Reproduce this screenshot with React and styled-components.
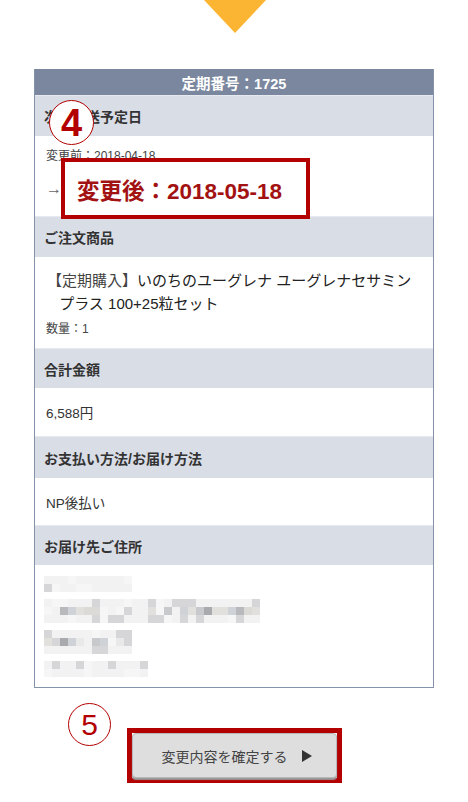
import React from 'react'
import styled, {createGlobalStyle} from 'styled-components'

const GlobalStyle = createGlobalStyle`
  html, body {
    margin: 0;
    padding: 0;
    background: #fff;
  }
  body {
    font-family: "Liberation Sans", "Noto Sans CJK JP", sans-serif;
    color: #333;
  }
`

const annotationRed = '#b30000'

const Page = styled.div`
  width: 468px;
  height: 802px;
  display: flex;
  flex-direction: column;
  align-items: center;
  overflow: hidden;
`

const ArrowDown = styled.div`
  width: 0;
  height: 0;
  border-left: 31px solid transparent;
  border-right: 31px solid transparent;
  border-top: 33px solid #fbb532;
  margin-left: 2px;
`

const Panel = styled.section`
  position: relative;
  box-sizing: border-box;
  width: 400px;
  margin-top: 36px;
  border: 1px solid #8593aa;
  border-top: none;
`

const PanelTitle = styled.div`
  height: 26px;
  background: #7a879e;
  color: #fff;
  font-weight: bold;
  font-size: 14.5px;
  display: flex;
  align-items: center;
  justify-content: center;
`

const SectionHead = styled.div`
  box-sizing: border-box;
  height: ${props => props.h || 41}px;
  background: #d9dde6;
  border-top: 1px solid #e6e9ef;
  padding-left: 9px;
  display: flex;
  align-items: center;
  font-size: 14px;
  font-weight: bold;
  color: #333;
`

const SectionBody = styled.div`
  box-sizing: border-box;
  height: ${props => props.h}px;
  padding: ${props => props.pad || '0 11px'};
  display: flex;
  flex-direction: column;
  justify-content: ${props => props.justify || 'center'};
  font-size: 13.5px;
  color: #333;
`

const BeforeLine = styled.div`
  font-size: 12px;
  color: #444;
  margin-top: 12px;
  line-height: 16px;
`

const AfterRow = styled.div`
  display: flex;
  align-items: center;
  margin-top: -6px;
`

const ArrowText = styled.span`
  font-size: 16px;
  color: #666;
  width: 14px;
  overflow: visible;
  white-space: nowrap;
`

const AfterBox = styled.div`
  position: relative;
  z-index: 1;
  box-sizing: border-box;
  width: 249px;
  height: 61px;
  margin-left: 1px;
  border: 4px solid ${annotationRed};
  background: #fff;
  display: flex;
  align-items: center;
  padding-left: 12px;
  color: #a31212;
  font-size: 22.5px;
  font-weight: bold;
`

const ProductName = styled.div`
  font-size: 15px;
  line-height: 23px;
  color: #222;
  padding-left: 2px;
  text-indent: -8px;
  margin-left: 7px;
`

const Bracket = styled.span`
  color: #444;
`

const Quantity = styled.div`
  font-size: 12px;
  color: #444;
  margin-top: 4px;
`

const AddressLines = styled.div`
  display: flex;
  flex-direction: column;
  gap: 7px;
  padding-top: 11px;
`

const Blur = styled.div`
  display: grid;
  grid-template-columns: repeat(${props => props.cols}, 8px);
  grid-auto-rows: ${props => props.rowH || 8}px;
  margin-left: -2px;
`

const Cell = styled.div`
  background: ${props => props.c};
`

const CircleMark = styled.div`
  position: absolute;
  box-sizing: border-box;
  width: ${props => props.size}px;
  height: ${props => props.size}px;
  border-radius: 50%;
  border: 1.5px solid ${annotationRed};
  background: ${props => (props.filled ? '#fff' : 'transparent')};
  color: ${annotationRed};
  display: flex;
  align-items: center;
  justify-content: center;
  line-height: 1;
  font-family: "Liberation Sans Narrow", "Liberation Sans", sans-serif;
  font-weight: ${props => (props.bold ? 'bold' : 'normal')};
  font-size: ${props => props.fs}px;
  left: ${props => props.x}px;
  top: ${props => props.y}px;
`

const Footer = styled.div`
  position: relative;
  width: 468px;
  margin-top: 40px;
  display: flex;
  justify-content: center;
`

const ButtonFrame = styled.div`
  border: 5px solid ${annotationRed};
  margin-left: 1px;
`

const ConfirmButton = styled.button`
  box-sizing: border-box;
  width: 205px;
  height: 45px;
  border: 1px solid #b8b8b8;
  border-radius: 4px;
  background: #dedede;
  box-shadow: 0 2px 1px #9a9a9a;
  font-family: "Liberation Sans", "Noto Sans CJK JP", sans-serif;
  font-size: 14px;
  color: #444;
  display: flex;
  align-items: center;
  justify-content: center;
  gap: 14px;
  padding: 0 0 0 4px;
  cursor: pointer;
`

const PlayIcon = styled.span`
  width: 0;
  height: 0;
  border-top: 6px solid transparent;
  border-bottom: 6px solid transparent;
  border-left: 10px solid #333;
`

// deterministic "pixelated" placeholder for the blurred address
const greys = ['#e9e9ea', '#d6d6d8', '#c8c9cc', '#f2f2f3', '#b8b9bc', '#dcdad6', '#cfd2d6', '#a9aaad', '#e2e0dc', '#f6f6f7']

function BlurBlock({cols, rows, seed}) {
  const cells = []
  let s = seed
  for (let i = 0; i < cols * rows; i++) {
    s = (s * 9301 + 49297) % 233280
    const row = Math.floor(i / cols)
    let idx = Math.floor((s / 233280) * greys.length)
    if (row === 0 || row === rows - 1) idx = (idx % 4 === 0) ? 3 : [0, 3, 9, 1][idx % 4]
    cells.push(<Cell key={i} c={greys[idx]} />)
  }
  return <Blur cols={cols}>{cells}</Blur>
}

export default function App() {
  return (
    <Page>
      <GlobalStyle />
      <ArrowDown />
      <Panel>
        <PanelTitle>定期番号：1725</PanelTitle>

        <SectionHead>次回発送予定日</SectionHead>
        <SectionBody h={80} justify="flex-start">
          <BeforeLine>変更前：2018-04-18</BeforeLine>
          <AfterRow>
            <ArrowText>→</ArrowText>
            <AfterBox>変更後：2018-05-18</AfterBox>
          </AfterRow>
        </SectionBody>

        <SectionHead>ご注文商品</SectionHead>
        <SectionBody h={91} pad="0 11px 0 11px">
          <ProductName>
            <Bracket>【定期購入】</Bracket>いのちのユーグレナ ユーグレナセサミン
            <br />&nbsp;プラス 100+25粒セット
          </ProductName>
          <Quantity>数量：1</Quantity>
        </SectionBody>

        <SectionHead h={40}>合計金額</SectionHead>
        <SectionBody h={48}>6,588円</SectionBody>

        <SectionHead h={42}>お支払い方法/お届け方法</SectionHead>
        <SectionBody h={47}>NP後払い</SectionBody>

        <SectionHead h={40}>お届け先ご住所</SectionHead>
        <SectionBody h={122} justify="flex-start">
          <AddressLines>
            <BlurBlock cols={11} rows={2} seed={7} />
            <BlurBlock cols={27} rows={3} seed={31} />
            <BlurBlock cols={11} rows={3} seed={13} />
            <BlurBlock cols={13} rows={2} seed={57} />
          </AddressLines>
        </SectionBody>

        <CircleMark filled bold size={45} fs={38} x={14} y={31}>4</CircleMark>
      </Panel>

      <Footer>
        <CircleMark size={43} fs={30} x={68} y={-25}>5</CircleMark>
        <ButtonFrame>
          <ConfirmButton>
            変更内容を確定する
            <PlayIcon />
          </ConfirmButton>
        </ButtonFrame>
      </Footer>
    </Page>
  )
}
